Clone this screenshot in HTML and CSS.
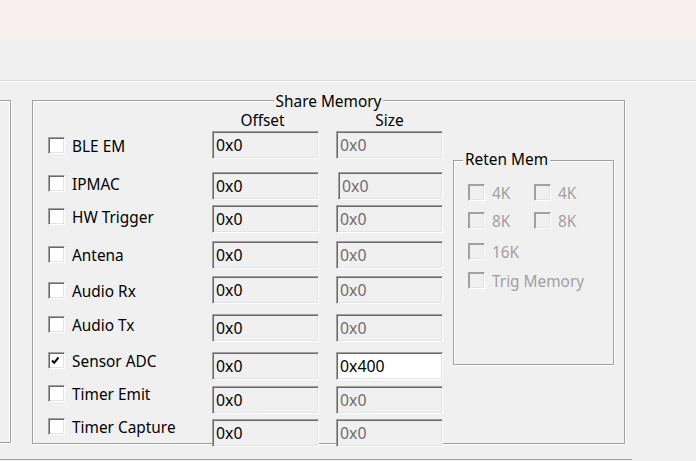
FILE: index.html
```html
<!DOCTYPE html>
<html>
<head>
<meta charset="utf-8">
<link rel="stylesheet" href="styles.css">
</head>
<body>
<div class="window">
  <div class="titlebar"></div>
  <div class="toolbar"></div>
  <div class="content">
    <div class="side-box"></div>
    <div class="group share">
      <span class="group-title centered">Share Memory</span>
      <div class="checks">
        <label class="check"><span class="box"></span><span class="txt">BLE EM</span></label>
        <label class="check"><span class="box"></span><span class="txt">IPMAC</span></label>
        <label class="check"><span class="box"></span><span class="txt">HW Trigger</span></label>
        <label class="check"><span class="box"></span><span class="txt">Antena</span></label>
        <label class="check"><span class="box"></span><span class="txt">Audio Rx</span></label>
        <label class="check"><span class="box"></span><span class="txt">Audio Tx</span></label>
        <label class="check"><span class="box"><svg viewBox="0 0 15 15" width="15" height="15"><path d="M3 7.5 L5.2 9.8 L9.5 4.5" fill="none" stroke="#000" stroke-width="2"/></svg></span><span class="txt">Sensor ADC</span></label>
        <label class="check"><span class="box"></span><span class="txt">Timer Emit</span></label>
        <label class="check"><span class="box"></span><span class="txt">Timer Capture</span></label>
      </div>
      <div class="fields">
        <div class="head head-offset">Offset</div>
        <div class="head">Size</div>
        <div class="field">0x0</div><div class="field disabled">0x0</div>
        <div class="field">0x0</div><div class="field disabled shifted">0x0</div>
        <div class="field">0x0</div><div class="field disabled">0x0</div>
        <div class="field">0x0</div><div class="field disabled">0x0</div>
        <div class="field">0x0</div><div class="field disabled">0x0</div>
        <div class="field">0x0</div><div class="field disabled">0x0</div>
        <div class="field">0x0</div><div class="field editable">0x400</div>
        <div class="field">0x0</div><div class="field disabled">0x0</div>
        <div class="field">0x0</div><div class="field disabled">0x0</div>
      </div>
      <div class="group reten">
        <span class="group-title left">Reten Mem</span>
        <div class="reten-grid">
          <label class="check dis"><span class="box"></span><span class="txt">4K</span></label>
          <label class="check dis"><span class="box"></span><span class="txt">4K</span></label>
          <label class="check dis"><span class="box"></span><span class="txt">8K</span></label>
          <label class="check dis"><span class="box"></span><span class="txt">8K</span></label>
          <label class="check dis wide"><span class="box"></span><span class="txt">16K</span></label>
          <label class="check dis wide"><span class="box"></span><span class="txt">Trig Memory</span></label>
        </div>
      </div>
    </div>
  </div>
  <div class="bottom-box"></div>
</div>
</body>
</html>
```
FILE: styles.css
```css
* { box-sizing: border-box; }
html, body {
  margin: 0;
  padding: 0;
  background: #f0f0f0;
  overflow: hidden;
  width: 696px;
  height: 461px;
}
body {
  font-family: "Noto Sans", "Open Sans", sans-serif;
  font-size: 15.4px;
  line-height: 20px;
  color: #000;
}
.titlebar {
  height: 37px;
  background: #f9efef;
}
.toolbar {
  height: 44px;
  border-bottom: 1px solid #dcdcdc;
  box-shadow: 0 1px 0 #fff;
}
.content {
  display: flex;
  padding-top: 19px;
  gap: 21px;
}
.side-box {
  margin-left: -20px;
  width: 31px;
  height: 343px;
  border: 1px solid #a0a0a0;
  border-left: none;
  box-shadow: 1px 1px 0 #fff, inset 0 1px 0 #fff, inset -1px 0 0 #fff;
}
.group {
  position: relative;
  border: 1px solid #a0a0a0;
  box-shadow: 1px 1px 0 #fff, inset 1px 1px 0 #fff;
}
.share {
  width: 593px;
  height: 344px;
  display: flex;
  padding-left: 15px;
}
.group-title {
  position: absolute;
  background: #f0f0f0;
  padding: 0 2px;
  white-space: nowrap;
}
.group-title.centered {
  top: -9px;
  left: 50%;
  transform: translateX(-50%);
}
.group-title.left {
  top: -11px;
  left: 9px;
}
.checks {
  width: 164px;
  padding-top: 36px;
  display: grid;
  grid-template-rows: 38px 33px 38px 36px 34px 36px 33px 33px 17px;
  align-content: start;
}
.check {
  display: flex;
  align-items: center;
  gap: 7px;
  height: 17px;
  white-space: nowrap;
}
.txt { margin-top: 3px; }
.box {
  flex: none;
  width: 17px;
  height: 17px;
  border: 1px solid;
  border-color: #a0a0a0 #fff #fff #a0a0a0;
  box-shadow: inset 1px 1px 0 #696969, inset -1px -1px 0 #e3e3e3;
  background: #fff;
  display: flex;
}
.box svg { display: block; margin: 0; }
.check.dis { color: #a0a0a0; }
.check.dis .box {
  background: #f0f0f0;
  box-shadow: inset 1px 1px 0 #a0a0a0, inset -1px -1px 0 #e3e3e3;
}
.fields {
  margin-top: 10px;
  display: grid;
  grid-template-columns: 107px 107px;
  column-gap: 17px;
  grid-template-rows: 20px 41px 33px 36px 35px 38px 38px 34px 33px 28px;
  align-content: start;
}
.head {
  text-align: center;
}
.head-offset { padding-right: 6px; }
.field {
  height: 28px;
  border: 1px solid;
  border-color: #a0a0a0 #fff #fff #a0a0a0;
  box-shadow: inset 1px 1px 0 #696969, inset -1px -1px 0 #e3e3e3;
  background: #f0f0f0;
  padding: 3px 0 0 3px;
  font-size: 15.8px;
  white-space: nowrap;
}
.field.disabled { color: #6d6d6d; }
.field.editable { background: #fff; }
.field.shifted { margin-left: 2px; }
.reten {
  margin-left: 10px;
  margin-top: 59px;
  width: 161px;
  height: 205px;
  padding: 23px 0 0 14px;
}
.reten-grid {
  display: grid;
  grid-template-columns: 66px auto;
  grid-template-rows: 28px 31px 29px 17px;
}
.reten-grid .wide { grid-column: 1 / -1; }
.bottom-box {
  margin-top: 15px;
  margin-left: -20px;
  width: 652px;
  height: 1px;
  border-top: 1px solid #a0a0a0;
  border-right: 1px solid #a0a0a0;
}
```
